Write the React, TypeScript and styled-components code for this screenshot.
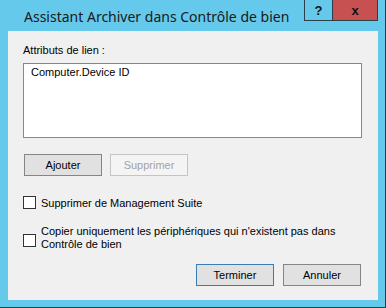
import styled, { createGlobalStyle } from 'styled-components';

const GlobalStyle = createGlobalStyle`
  html, body {
    margin: 0;
    padding: 0;
    background: #ffffff;
  }
  * {
    box-sizing: border-box;
  }
`;

const Ventana = styled.div`
  width: 386px;
  height: 308px;
  background: #64c9ea;
  border-right: 1px solid #2b3b47;
  border-bottom: 1px solid #2b3b47;
  display: flex;
  flex-direction: column;
  padding: 0 7px 7px 8px;
  font-family: "Liberation Sans", Arial, sans-serif;
  font-size: 11px;
  color: #000;
`;

const BarraTitulo = styled.div`
  height: 31px;
  display: flex;
  align-items: flex-start;
  justify-content: space-between;
`;

const Titulo = styled.div`
  font-family: "Noto Sans", "Open Sans", sans-serif;
  font-size: 14px;
  line-height: 20px;
  padding: 7px 0 0 16px;
  color: #1a1a1a;
  white-space: nowrap;
`;

const Controles = styled.div`
  display: flex;
  height: 21px;
`;

const BotonVentana = styled.div<{ ancho: number; fondo: string; ultimo?: boolean }>`
  width: ${({ ancho }) => ancho}px;
  height: 21px;
  background: ${({ fondo }) => fondo};
  border-left: 1px solid #2d3e4a;
  border-bottom: 1px solid #2d3e4a;
  ${({ ultimo }) => (ultimo ? 'border-right: 1px solid #2d3e4a;' : '')}
  display: flex;
  align-items: center;
  justify-content: center;
  font-family: "Liberation Sans", Arial, sans-serif;
  font-weight: bold;
  font-size: 13px;
  color: #111;
`;

const Panel = styled.div`
  flex: 1;
  background: #f0f0f0;
  padding: 13px 16px 0 15px;
  display: flex;
  flex-direction: column;
`;

const Etiqueta = styled.div`
  line-height: 13px;
  height: 13px;
`;

const Lista = styled.div`
  margin-top: 6px;
  height: 75px;
  background: #fff;
  border: 1px solid #828790;
  padding: 2px 7px;
  line-height: 13px;
`;

const FilaBotones = styled.div<{ derecha?: boolean }>`
  display: flex;
  gap: ${({ derecha }) => (derecha ? 9 : 8)}px;
  justify-content: ${({ derecha }) => (derecha ? 'flex-end' : 'flex-start')};
  padding-left: ${({ derecha }) => (derecha ? 0 : 1)}px;
  padding-right: ${({ derecha }) => (derecha ? 1 : 0)}px;
`;

const Boton = styled.button<{ tipo?: 'defecto' | 'deshabilitado' }>`
  width: 78px;
  height: 22px;
  margin: 0;
  padding: 0 0 1px;
  font-family: "Liberation Sans", Arial, sans-serif;
  font-size: 11px;
  background: ${({ tipo }) => (tipo === 'deshabilitado' ? '#f4f4f4' : '#e1e1e1')};
  color: ${({ tipo }) => (tipo === 'deshabilitado' ? '#a3a3a3' : '#000')};
  border: 1px solid
    ${({ tipo }) =>
      tipo === 'defecto' ? '#3a7db5' : tipo === 'deshabilitado' ? '#c4c4c4' : '#858585'};
  border-radius: 0;
  outline: none;
`;

const Opcion = styled.label<{ arriba: number }>`
  display: flex;
  align-items: flex-start;
  gap: 5px;
  margin-top: ${({ arriba }) => arriba}px;
  line-height: 13px;
`;

const Casilla = styled.span<{ bajar: number }>`
  flex: none;
  width: 13px;
  height: 13px;
  margin-top: ${({ bajar }) => bajar}px;
  margin-left: 0;
  background: #fff;
  border: 1px solid #333;
`;

const TextoOpcion = styled.span`
  padding-top: 1px;
`;

export default function App() {
  return (
    <>
      <GlobalStyle />
      <Ventana>
        <BarraTitulo>
          <Titulo>Assistant Archiver dans Contrôle de bien</Titulo>
          <Controles>
            <BotonVentana ancho={28} fondo="#64c9ea">?</BotonVentana>
            <BotonVentana ancho={46} fondo="#c75050" ultimo>x</BotonVentana>
          </Controles>
        </BarraTitulo>
        <Panel>
          <Etiqueta>Attributs de lien :</Etiqueta>
          <Lista>Computer.Device ID</Lista>
          <div style={{ height: 16 }} />
          <FilaBotones>
            <Boton>Ajouter</Boton>
            <Boton tipo="deshabilitado">Supprimer</Boton>
          </FilaBotones>
          <Opcion arriba={20}>
            <Casilla bajar={0} />
            <TextoOpcion>Supprimer de Management Suite</TextoOpcion>
          </Opcion>
          <Opcion arriba={14}>
            <Casilla bajar={10} />
            <TextoOpcion>
              Copier uniquement les périphériques qui n'existent pas dans
              <br />
              Contrôle de bien
            </TextoOpcion>
          </Opcion>
          <div style={{ height: 13 }} />
          <FilaBotones derecha>
            <Boton tipo="defecto">Terminer</Boton>
            <Boton>Annuler</Boton>
          </FilaBotones>
        </Panel>
      </Ventana>
    </>
  );
}
